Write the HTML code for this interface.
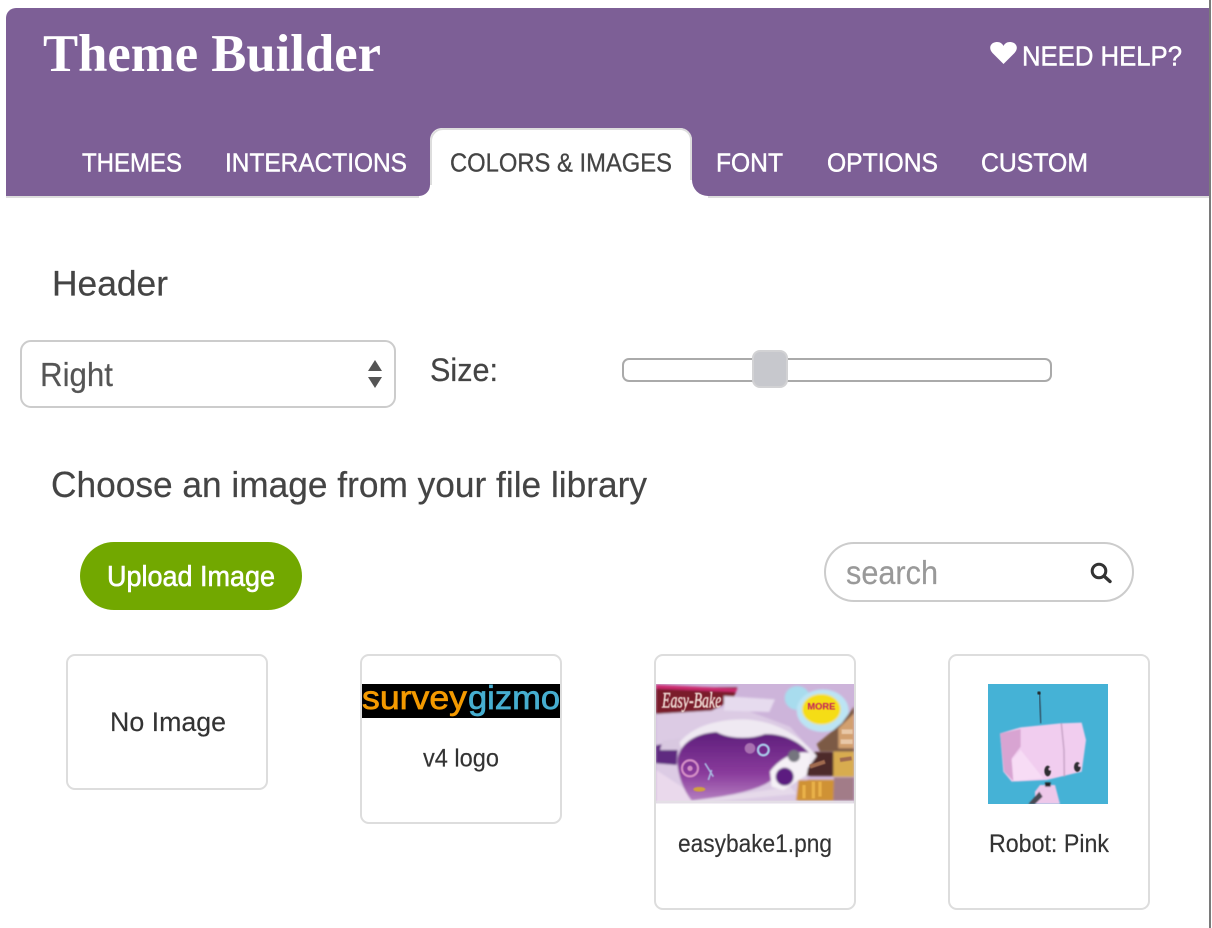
<!DOCTYPE html>
<html lang="en">
<head>
<meta charset="utf-8">
<title>Theme Builder</title>
<style>
html,body{margin:0;padding:0;background:#fff;width:1212px;height:928px;overflow:hidden}
svg{display:block}
text{font-family:"Liberation Sans",sans-serif}
.tab{font-size:26px;fill:#fff;stroke:#fff;stroke-width:.45px}
.ctext{font-size:26px;fill:#333;stroke:#333;stroke-width:.15px}
</style>
</head>
<body>
<svg width="1212" height="928" viewBox="0 0 1212 928" xmlns="http://www.w3.org/2000/svg">
<defs>
<filter id="b0" x="-5%" y="-5%" width="110%" height="110%"><feGaussianBlur stdDeviation="1.5"/></filter>
<filter id="b1" x="-5%" y="-5%" width="110%" height="110%"><feGaussianBlur stdDeviation="3"/></filter>
<filter id="b2" x="-5%" y="-5%" width="110%" height="110%"><feGaussianBlur stdDeviation="2.5"/></filter>
<linearGradient id="ov" x1="0" y1="0" x2="0" y2="1"><stop offset="0" stop-color="#5e1f7c"/><stop offset=".6" stop-color="#8a3b9c"/><stop offset="1" stop-color="#b47fc0"/></linearGradient>
<clipPath id="ebc"><rect x="18" y="42" width="594" height="358"/></clipPath>
<clipPath id="rbc"><rect x="24" y="27" width="360" height="360"/></clipPath>
</defs>
<rect width="1212" height="928" fill="#fff"/>
<rect x="1209" y="0" width="2" height="928" fill="#7a7a7a"/>

<!-- header -->
<path d="M6 196V18a10 10 0 0 1 10-10H1209V196Z" fill="#7d5f96"/>
<rect x="6" y="196" width="420" height="2" fill="#ddd"/>
<rect x="706" y="196" width="503" height="2" fill="#ddd"/>
<path d="M419 196a11 11 0 0 0 11-11V140a12 12 0 0 1 12-12H680a12 12 0 0 1 12 12V180a16 16 0 0 0 16 16V199H419Z" fill="#fff"/>
<path d="M431 185V141a12 12 0 0 1 12-12H680a11 11 0 0 1 11 11V180" fill="none" stroke="#ddd" stroke-width="2"/>

<text x="43" y="71" textLength="338" lengthAdjust="spacingAndGlyphs" style="font-family:'Liberation Serif',serif;font-weight:700;font-size:53px" fill="#fff">Theme Builder</text>
<path d="M1003.500 64L992.500 53C988 48 990.500 42.500 996.500 42C1000 41.800 1002.300 43.500 1003.500 46C1004.700 43.500 1007 41.800 1010.500 42C1016.500 42.500 1019 48 1014.500 53Z" fill="#fff"/>
<text x="1022" y="65.500" textLength="160" lengthAdjust="spacingAndGlyphs" font-size="28" fill="#fff" stroke="#fff" stroke-width=".45">NEED HELP?</text>

<text class="tab" x="82" y="171.500" textLength="100" lengthAdjust="spacingAndGlyphs">THEMES</text>
<text class="tab" x="225" y="171.500" textLength="182" lengthAdjust="spacingAndGlyphs">INTERACTIONS</text>
<text class="tab" x="450" y="171.500" textLength="222" lengthAdjust="spacingAndGlyphs" style="fill:#444;stroke:#444;stroke-width:.3px">COLORS &amp; IMAGES</text>
<text class="tab" x="716" y="171.500" textLength="67" lengthAdjust="spacingAndGlyphs">FONT</text>
<text class="tab" x="827" y="171.500" textLength="111" lengthAdjust="spacingAndGlyphs">OPTIONS</text>
<text class="tab" x="981" y="171.500" textLength="107" lengthAdjust="spacingAndGlyphs">CUSTOM</text>

<!-- header controls -->
<text x="52" y="295.500" textLength="116" lengthAdjust="spacingAndGlyphs" font-size="35" fill="#444" stroke="#444" stroke-width=".2">Header</text>
<rect x="21" y="341" width="374" height="66" rx="10" fill="#fff" stroke="#ccc" stroke-width="2"/>
<text x="40" y="386" textLength="73" lengthAdjust="spacingAndGlyphs" font-size="33" fill="#555" stroke="#555" stroke-width=".2">Right</text>
<path d="M375 360L382 371H368Z M368 377H382L375 388Z" fill="#555"/>
<text x="430" y="381" textLength="68" lengthAdjust="spacingAndGlyphs" font-size="32" fill="#444" stroke="#444" stroke-width=".2">Size:</text>
<rect x="623" y="359" width="428" height="22" rx="6" fill="#fff" stroke="#aaa" stroke-width="2"/>
<rect x="753" y="351" width="34" height="36" rx="7" fill="#c7c8cd" stroke="#d2d2d4" stroke-width="2"/>

<text x="51" y="497" textLength="596" lengthAdjust="spacingAndGlyphs" font-size="36" fill="#444" stroke="#444" stroke-width=".2">Choose an image from your file library</text>

<rect x="80" y="542" width="222" height="68" rx="34" fill="#72a800"/>
<text x="107" y="586" textLength="168" lengthAdjust="spacingAndGlyphs" font-size="29" fill="#fff" stroke="#fff" stroke-width=".6">Upload Image</text>

<rect x="825" y="543" width="308" height="58" rx="29" fill="#fff" stroke="#ccc" stroke-width="2"/>
<text x="846" y="584" textLength="92" lengthAdjust="spacingAndGlyphs" font-size="33" fill="#999" stroke="#999" stroke-width=".2">search</text>
<circle cx="1099" cy="571" r="6.800" fill="none" stroke="#333" stroke-width="3"/>
<path d="M1104.500 576.500L1110 581.500" stroke="#333" stroke-width="3.400" stroke-linecap="round"/>

<!-- cards -->
<g fill="#fff" stroke="#ddd" stroke-width="2">
<rect x="67" y="655" width="200" height="134" rx="8"/>
<rect x="361" y="655" width="200" height="168" rx="8"/>
<rect x="655" y="655" width="200" height="254" rx="8"/>
<rect x="949" y="655" width="200" height="254" rx="8"/>
</g>
<text class="ctext" x="110" y="731" textLength="116" lengthAdjust="spacingAndGlyphs" font-size="27" style="font-size:27px">No Image</text>

<!-- surveygizmo logo -->
<rect x="362" y="684" width="198" height="34" fill="#000"/>
<text x="362" y="709" textLength="105" lengthAdjust="spacingAndGlyphs" font-size="33" fill="#f49a00" stroke="#f49a00" stroke-width=".7">survey</text>
<text x="468" y="709" textLength="92" lengthAdjust="spacingAndGlyphs" font-size="33" fill="#46aed0" stroke="#46aed0" stroke-width=".7">gizmo</text>
<text class="ctext" x="423" y="766.500" textLength="76" lengthAdjust="spacingAndGlyphs" style="font-size:25px">v4 logo</text>

<!-- easybake image -->
<g transform="translate(650 670) scale(.33333)" clip-path="url(#ebc)">
<rect x="18" y="42" width="594" height="358" fill="#cdb4da"/>
<g filter="url(#b1)">
<path d="M18 130L260 110L420 170L500 260L440 400H18Z" fill="#dccbe4"/>
<path d="M18 300L110 360L130 400H18Z" fill="#ead9ec"/>
<path d="M18 52H262L250 88L185 122L18 132Z" fill="#7a1c2c"/>
<path d="M18 44L262 56L258 66L18 56Z" fill="#cc2a6e"/>
<path d="M222 78L375 88L358 126L222 122Z" fill="#e6dbee"/>
<ellipse cx="442" cy="84" rx="38" ry="36" fill="#a8dcee"/>
<ellipse cx="518" cy="122" rx="78" ry="64" fill="#bce4f4"/>
<ellipse cx="514" cy="118" rx="58" ry="46" fill="#f5dd14"/>
<path d="M500 222L575 160L612 110V245H510Z" fill="#7c5a44"/>
<path d="M565 175L612 130V235H565Z" fill="#d2a070"/>
<path d="M550 245H612V320H548Z" fill="#d8ac50"/>
<path d="M478 246H550V318H470Z" fill="#4e2a2a"/>
<path d="M445 330H552V392H438Z" fill="#cf9236"/>
<path d="M552 322H612V392H550Z" fill="#a27c88"/>
<path d="M18 226L85 212L80 285L18 280Z" fill="#5e2a80"/>
<path d="M38 212L95 205L85 240L30 240Z" fill="#d8c8e0"/>
<path d="M88 218C130 165 210 148 280 148C370 150 450 195 500 258L470 300L120 300Z" fill="#efe9f2"/>
<path d="M82 275C85 225 130 190 200 186C230 205 300 210 345 192C400 190 450 215 478 250L420 282L365 330C320 365 220 380 125 392C100 360 85 320 82 275Z" fill="url(#ov)"/>
<path d="M125 392C220 380 320 365 420 350L440 372L130 400Z" fill="#e6daea"/>
<path d="M360 305C385 268 440 236 482 250L470 315L400 360L365 350Z" fill="#f5f1f6"/>
<ellipse cx="404" cy="320" rx="27" ry="27" fill="#5c1a80"/>
<circle cx="432" cy="258" r="18" fill="#74747e"/>
</g>
<g filter="url(#b0)" fill="none">
<circle cx="120" cy="295" r="24" stroke="#d28cc4" stroke-width="7"/>
<circle cx="120" cy="295" r="8" fill="#d28cc4"/>
<circle cx="340" cy="240" r="16" stroke="#a8c8e8" stroke-width="7"/>
<circle cx="300" cy="235" r="16" fill="#a870b0"/>
<path d="M165 280L190 320M185 300L175 330" stroke="#a8b8e0" stroke-width="5"/>
<ellipse cx="148" cy="358" rx="18" ry="7" fill="#d0a040"/>
<path d="M462 345V385M490 335V385M510 335V380" stroke="#e8b048" stroke-width="10"/>
<path d="M480 290L525 275M570 270L605 265" stroke="#a06a50" stroke-width="12"/>
<path d="M575 185H608M572 215H608" stroke="#e8c8a8" stroke-width="14"/>
</g>
<path d="M18 392H612V400H18Z" fill="#e4e0e6" filter="url(#b0)"/>
<text x="36" y="112" textLength="178" lengthAdjust="spacingAndGlyphs" font-size="66" style="font-family:'Liberation Serif',serif" font-style="italic" fill="#f3dfd8" stroke="#f3dfd8" stroke-width="1.5" filter="url(#b0)">Easy-Bake</text>
<g filter="url(#b0)" font-weight="700" text-anchor="middle" fill="#c2185b">
<text x="514" y="118" font-size="28">MORE</text>
</g>
</g>
<text class="ctext" x="678" y="852" textLength="154" lengthAdjust="spacingAndGlyphs" style="font-size:25px">easybake1.png</text>

<!-- robot image -->
<g transform="translate(980 675) scale(.33333)" clip-path="url(#rbc)">
<rect x="24" y="27" width="360" height="360" fill="#45b2d6"/>
<path d="M178 55L183 145" stroke="#33566a" stroke-width="5" filter="url(#b0)"/>
<circle cx="177" cy="54" r="5" fill="#222" filter="url(#b0)"/>
<g filter="url(#b2)">
<path d="M165 387V350L180 330H225L240 387Z" fill="#eec8ea"/>
<path d="M145 387L178 350L188 365L165 387Z" fill="#4a4a52"/>
<path d="M195 322H212V335H195Z" fill="#222"/>
<path d="M60 175L122 157L240 145L305 143L318 195L305 290L200 315L95 320L70 290Z" fill="#f1cdef"/>
<path d="M60 175L122 162V215L95 250L102 320L72 290Z" fill="#d8a4d2"/>
<path d="M95 255L122 225L190 310L100 318Z" fill="#f7dcf5"/>
<path d="M244 145L252 225L253 305" fill="none" stroke="#c09cc0" stroke-width="4"/>
</g>
<g filter="url(#b0)">
<ellipse cx="203" cy="288" rx="10" ry="16" fill="#2e2e30"/>
<ellipse cx="292" cy="276" rx="10" ry="15" fill="#2e2e30"/>
<circle cx="210" cy="282" r="4" fill="#f1cdef"/>
<circle cx="299" cy="271" r="4" fill="#f1cdef"/>
</g>
</g>
<text class="ctext" x="989" y="852" textLength="120" lengthAdjust="spacingAndGlyphs" style="font-size:25px">Robot: Pink</text>
</svg>
</body>
</html>
